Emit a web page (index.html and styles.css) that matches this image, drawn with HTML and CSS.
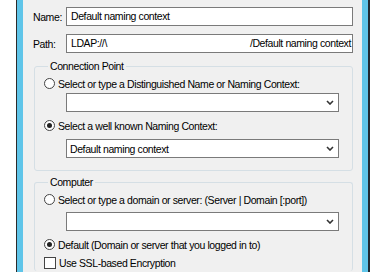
FILE: index.html
```html
<!DOCTYPE html>
<html lang="en">
<head>
  <meta charset="UTF-8" />
  <title>Connection Settings</title>
  <link rel="stylesheet" href="styles.css">
</head>
<body>

  <div class="edge-left"></div>
  <div class="frame"></div>

  <div class="dialog">

    <div class="row first">
      <span class="label">Name:</span>
      <div class="textbox">Default naming context</div>
    </div>

    <div class="row">
      <span class="label">Path:</span>
      <div class="textbox path">
        <span>LDAP://\</span>
        <span class="tail">/Default naming context</span>
      </div>
    </div>

    <fieldset class="group">
      <legend>Connection Point</legend>

      <div class="option">
        <span class="radio"></span>
        <span>Select or type a Distinguished Name or Naming Context:</span>
      </div>
      <div class="combo first-combo">
        <span></span>
        <svg width="8" height="5" viewBox="0 0 8 5"><polyline points="1,1 4,4 7,1" fill="none" stroke="#333" stroke-width="1.6"/></svg>
      </div>

      <div class="option spaced">
        <span class="radio checked"></span>
        <span>Select a well known Naming Context:</span>
      </div>
      <div class="combo">
        <span>Default naming context</span>
        <svg width="8" height="5" viewBox="0 0 8 5"><polyline points="1,1 4,4 7,1" fill="none" stroke="#333" stroke-width="1.6"/></svg>
      </div>
    </fieldset>

    <fieldset class="group computer">
      <legend>Computer</legend>

      <div class="option">
        <span class="radio"></span>
        <span>Select or type a domain or server: (Server | Domain [:port])</span>
      </div>
      <div class="combo server-combo">
        <span></span>
        <svg width="8" height="5" viewBox="0 0 8 5"><polyline points="1,1 4,4 7,1" fill="none" stroke="#333" stroke-width="1.6"/></svg>
      </div>

      <div class="option spaced">
        <span class="radio checked"></span>
        <span>Default (Domain or server that you logged in to)</span>
      </div>
      <div class="option check-row">
        <span class="checkbox"></span>
        <span>Use SSL-based Encryption</span>
      </div>
    </fieldset>

  </div>

  <div class="frame"></div>
  <div class="edge-right"></div>

</body>
</html>
```

FILE: styles.css
```css
html {
  overflow: hidden;
}

body {
  margin: 0;
  width: 370px;
  height: 272px;
  overflow: hidden;
  display: flex;
  background: #ffffff;
  font-family: 'Liberation Sans', Arial, sans-serif;
  font-size: 10.5px;
  letter-spacing: -0.4px;
  color: #000;
}

.edge-left {
  width: 16px;
  border-right: 1px solid #2b2b2b;
  background: #ffffff;
}

.frame {
  width: 6px;
  background: #5fc5e9;
}

.edge-right {
  width: 2px;
  background: #1f2a33;
}

.dialog {
  width: 339px;
  background: #f0f0f0;
  padding: 0 9px 0 10px;
  box-sizing: border-box;
}

.row {
  display: flex;
  align-items: center;
  margin-top: 8px;
}

.row.first {
  margin-top: 7px;
}

.label {
  width: 33px;
}

.textbox {
  flex: 1;
  height: 19px;
  box-sizing: border-box;
  border: 1px solid #7a7a7a;
  background: #fff;
  padding: 0 4px;
  line-height: 17px;
  white-space: nowrap;
  overflow: hidden;
}

.textbox.path {
  display: flex;
  justify-content: space-between;
  padding-right: 1px;
}

.group {
  margin: 7px 0 0 1px;
  width: 319px;
  box-sizing: border-box;
  border: 1px solid #d5dfe5;
  border-radius: 3px;
  padding: 4px 12px 12px 9px;
}

.group legend {
  padding: 0 2px;
  margin-left: 4px;
  line-height: 13px;
}

.group.computer {
  margin-top: 5px;
  height: 95px;
  border-bottom: none;
}

.option {
  display: flex;
  align-items: center;
  height: 13px;
}

.option.spaced {
  margin-top: 7px;
}

.radio {
  width: 11px;
  height: 11px;
  box-sizing: border-box;
  border: 1px solid #444;
  border-radius: 50%;
  background: #fff;
  margin-right: 3px;
  display: flex;
  align-items: center;
  justify-content: center;
}

.radio.checked::after {
  content: "";
  width: 5px;
  height: 5px;
  border-radius: 50%;
  background: #222;
}

.checkbox {
  width: 12px;
  height: 12px;
  box-sizing: border-box;
  border: 1px solid #444;
  background: #fff;
  margin-right: 3px;
}

.check-row {
  margin-top: 5px;
}

.combo {
  margin: 7px 0 0 22px;
  width: 273px;
  height: 19px;
  box-sizing: border-box;
  border: 1px solid #7a7a7a;
  background: #fff;
  padding: 0 4px 0 3px;
  display: flex;
  align-items: center;
  justify-content: space-between;
  white-space: nowrap;
}

.combo.first-combo {
  margin-top: 3px;
}

.combo.server-combo {
  margin-top: 6px;
}
```
